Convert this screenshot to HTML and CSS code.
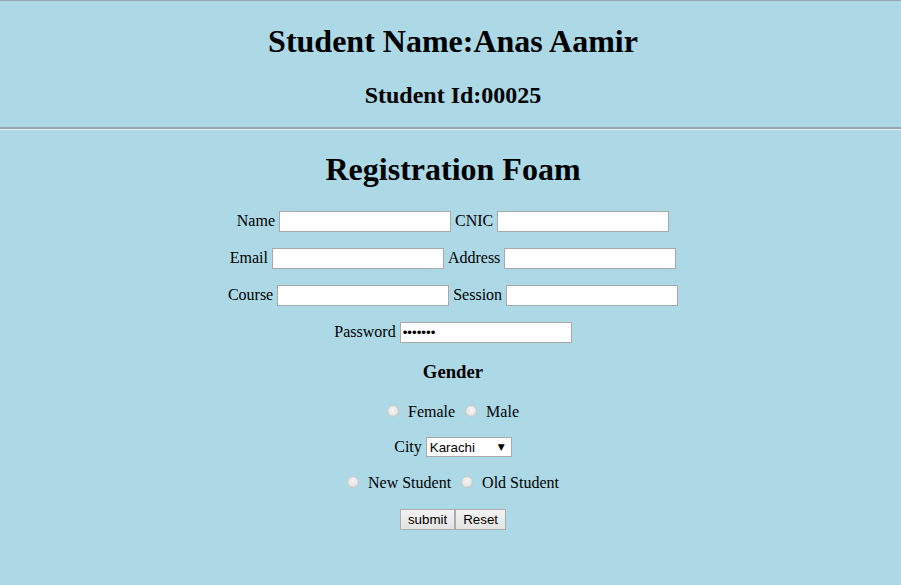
FILE: index.html
```html
<!DOCTYPE html>
<html>
<head>
<meta charset="utf-8">
<link rel="stylesheet" href="styles.css">
</head>
<body>
<header class="top">
  <h1 class="title">Student Name:Anas Aamir</h1>
  <h2 class="sub">Student Id:00025</h2>
</header>
<main class="form">
  <h1 class="form-title">Registration Foam</h1>
  <div class="row first">
    <label>Name <input type="text" class="field"></label>
    <label>CNIC <input type="text" class="field"></label>
  </div>
  <div class="row">
    <label>Email <input type="text" class="field"></label>
    <label>Address <input type="text" class="field"></label>
  </div>
  <div class="row">
    <label>Course <input type="text" class="field"></label>
    <label>Session <input type="text" class="field"></label>
  </div>
  <div class="row">
    <label>Password <input type="password" class="field" value="1234567"></label>
  </div>
  <h3 class="gender">Gender</h3>
  <div class="row radios gender-row">
    <label><input type="radio" name="g" class="radio">Female</label>
    <label><input type="radio" name="g" class="radio">Male</label>
  </div>
  <div class="row city-row">
    <label>City <span class="select-wrap"><select class="city"><option>Karachi</option></select><span class="arrow">▼</span></span></label>
  </div>
  <div class="row radios student-row">
    <label><input type="radio" name="s" class="radio">New Student</label>
    <label><input type="radio" name="s" class="radio">Old Student</label>
  </div>
  <div class="row buttons">
    <button class="btn">submit</button><button class="btn">Reset</button>
  </div>
</main>
</body>
</html>
```
FILE: styles.css
```css
html, body {
  margin: 0;
  padding: 0;
}
body {
  background: #add8e6;
  font-family: "Liberation Serif", "Times New Roman", serif;
  font-size: 16px;
  color: #000;
  height: 585px;
  overflow: hidden;
  padding-left: 5px;
}
.top {
  border-top: 1px solid #9aa6ad;
  border-bottom: 2px solid #9aa6ad;
  box-shadow: 0 1px 0 #e4ecef;
  text-align: center;
  padding-top: 22px;
  height: 104px;
  margin-left: -5px;
  padding-left: 5px;
}
.title {
  margin: 0;
  font-size: 32px;
  line-height: 37px;
}
.sub {
  margin: 21px 0 0;
  font-size: 24px;
  line-height: 28px;
}
.form {
  text-align: center;
}
.form-title {
  margin: 22px 0 0;
  font-size: 32px;
  line-height: 37px;
}
.row {
  display: flex;
  justify-content: center;
  align-items: center;
  gap: 4px;
  height: 22px;
  margin-top: 15px;
}
.row.first {
  margin-top: 22px;
}
.row label {
  display: inline-flex;
  align-items: center;
  gap: 4px;
}
.field {
  width: 172px;
  height: 21px;
  box-sizing: border-box;
  border: 1px solid #a9a9a9;
  background: #fff;
  padding: 1px 2px;
  margin: 0;
  font-family: "Liberation Sans", Arial, sans-serif;
  font-size: 13.33px;
}
.gender {
  margin: 18px 0 0;
  font-size: 18.72px;
  line-height: 22px;
}
.radios {
  gap: 10px;
}
.gender-row {
  margin-top: 18px;
}
.radios label {
  gap: 9px;
}
.radio {
  appearance: none;
  -webkit-appearance: none;
  width: 12px;
  height: 12px;
  margin: -3px 0 0 0;
  border-radius: 50%;
  border: 1px solid #c9c9c9;
  background: radial-gradient(circle at 50% 40%, #f6f6f6 0%, #e4e4e4 65%, #d4d4d4 100%);
  box-sizing: border-box;
}
.city-row {
  margin-top: 13px;
}
.select-wrap {
  position: relative;
  display: inline-block;
  height: 20px;
}
.city {
  appearance: none;
  -webkit-appearance: none;
  width: 86px;
  height: 20px;
  font-family: "Liberation Sans", Arial, sans-serif;
  font-size: 13.33px;
  border: 1px solid #a9a9a9;
  background: #fff;
  margin: 0;
  padding: 0 3px;
  color: #000;
  display: block;
}
.arrow {
  position: absolute;
  right: 7px;
  top: 3px;
  font-family: "DejaVu Sans", sans-serif;
  font-size: 9px;
  line-height: 14px;
  pointer-events: none;
}
.student-row {
  margin-top: 14px;
}
.buttons {
  gap: 0;
  margin-top: 14px;
}
.btn {
  font-family: "Liberation Sans", Arial, sans-serif;
  font-size: 13.33px;
  height: 21px;
  padding: 0 7px;
  margin: 0;
  border: 1px solid #acacac;
  background: linear-gradient(#f2f2f2, #e3e3e3);
  color: #000;
}
```
